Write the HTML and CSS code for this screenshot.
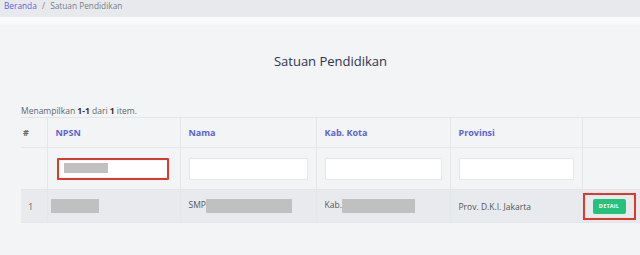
FILE: index.html
```html
<!DOCTYPE html>
<html lang="id">
<head>
  <meta charset="UTF-8" />
  <title>Satuan Pendidikan</title>
  <meta name="viewport" content="width=device-width, initial-scale=1.0" />
  <link rel="stylesheet" href="styles.css">
</head>
<body>
  <nav class="breadcrumb">
    <a href="#" class="crumb-link">Beranda</a>
    <span class="crumb-sep">/</span>
    <span class="crumb-current">Satuan Pendidikan</span>
  </nav>
  <div class="strip"></div>

  <main class="content">
    <h1 class="page-title">Satuan Pendidikan</h1>

    <div class="summary">Menampilkan <b>1-1</b> dari <b>1</b> item.</div>

    <table class="grid">
      <colgroup>
        <col class="c-no">
        <col class="c-npsn">
        <col class="c-nama">
        <col class="c-kab">
        <col class="c-prov">
        <col class="c-act">
      </colgroup>
      <thead>
        <tr class="head-row">
          <th class="th-no">#</th>
          <th><a href="#">NPSN</a></th>
          <th><a href="#">Nama</a></th>
          <th><a href="#">Kab. Kota</a></th>
          <th><a href="#">Provinsi</a></th>
          <th></th>
        </tr>
        <tr class="filter-row">
          <td></td>
          <td><div class="field field-marked"><span class="blur blur-sm"></span></div></td>
          <td><div class="field"></div></td>
          <td><div class="field"></div></td>
          <td><div class="field"></div></td>
          <td></td>
        </tr>
      </thead>
      <tbody>
        <tr class="data-row">
          <td class="td-no">1</td>
          <td><span class="blur blur-npsn"></span></td>
          <td>SMP<span class="blur blur-nama"></span></td>
          <td>Kab.<span class="blur blur-kab"></span></td>
          <td>Prov. D.K.I. Jakarta</td>
          <td class="td-act"><span class="mark"><button class="btn-detail">DETAIL</button></span></td>
        </tr>
      </tbody>
    </table>
  </main>
</body>
</html>
```

FILE: styles.css
```css
* { box-sizing: border-box; }

body {
  margin: 0;
  font-family: 'Open Sans', 'Noto Sans', sans-serif;
  background: #f3f4f6;
  color: #555;
  height: 255px;
  overflow: hidden;
}

.breadcrumb {
  height: 17px;
  background: #e8e9ed;
  padding: 0 4px;
  font-size: 8.3px;
  line-height: 12px;
  color: #7a7d86;
}

.crumb-link {
  color: #5865d8;
  text-decoration: none;
}

.crumb-sep {
  margin: 0 3px;
}

.strip {
  height: 8px;
  background: linear-gradient(to bottom, #fbfbfc, #f7f8f9);
}

.content {
  padding: 0 0 0 21px;
}

.page-title {
  margin: 0;
  padding: 26px 0 0;
  height: 80px;
  font-size: 13px;
  line-height: 20px;
  font-weight: 400;
  color: #2f3350;
  text-align: center;
}

.summary {
  font-size: 8.5px;
  line-height: 12px;
  color: #666;
}

.summary b {
  color: #333;
}

.grid {
  border-collapse: collapse;
  table-layout: fixed;
  width: 619px;
  font-size: 8.5px;
}

.c-no { width: 26px; }
.c-npsn { width: 133px; }
.c-nama { width: 136px; }
.c-kab { width: 134px; }
.c-prov { width: 132px; }
.c-act { width: 58px; }

.grid th,
.grid td {
  border: 1px solid #e4e6ea;
  padding: 0 8px;
  text-align: left;
  vertical-align: middle;
  white-space: nowrap;
}

.grid tr > :first-child { border-left: none; }

.head-row { height: 30px; }

.head-row th {
  font-weight: 700;
  font-size: 9px;
}

.head-row th a {
  color: #5a63d8;
  text-decoration: none;
}

.th-no,
.td-no {
  color: #666;
  text-align: center;
}

.grid .th-no { padding: 0 0 0 2px; }
.grid .td-no { padding: 0 6px 0 0; text-align: center; }

.filter-row { height: 42px; }

.field {
  height: 22px;
  background: #fff;
  border: 1px solid #e6e7ea;
  border-radius: 1px;
}

.field-marked {
  margin: 0 3px 0 1px;
  border: 2.5px solid #e0392c;
  padding: 3px 5px;
}

.blur {
  display: inline-block;
  background: #c0c0c0;
  vertical-align: middle;
}

.blur-sm { width: 44px; height: 10px; display: block; }
.blur-npsn { width: 48px; height: 14px; margin-left: -5px; }
.blur-nama { width: 86px; height: 14px; }
.blur-kab { width: 73px; height: 14px; }

.data-row {
  height: 33px;
  background: #e9eaed;
  color: #555;
}

.grid .td-act { padding: 0 5px 0 0; }

.mark {
  display: flex;
  align-items: center;
  justify-content: center;
  width: 53px;
  height: 27px;
  border: 2.5px solid #e0392c;
}

.btn-detail {
  width: 33px;
  height: 15px;
  padding: 0;
  border: none;
  border-radius: 2px;
  background: #24c27a;
  color: #fff;
  font-family: 'Open Sans', sans-serif;
  font-size: 5.5px;
  font-weight: 700;
  letter-spacing: 0.2px;
}
```
